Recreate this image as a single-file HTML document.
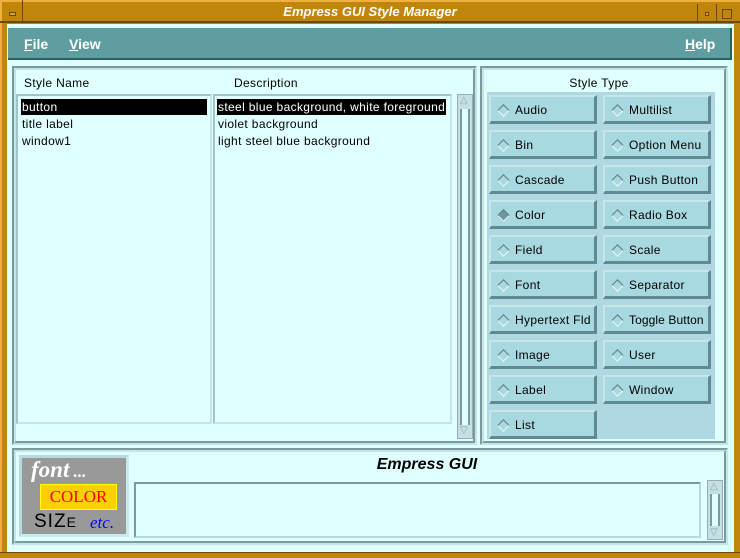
<!DOCTYPE html>
<html><head><style>
*{margin:0;padding:0;box-sizing:border-box}
body{width:740px;height:558px;background:#c0860c;position:relative;overflow:hidden;font-family:"Liberation Sans","DejaVu Sans",sans-serif;font-size:12px;color:#000;letter-spacing:0.35px}
.a{position:absolute}
.sunk{border-style:solid;border-width:2px;border-color:#7a9a9e #c4e4e6 #c4e4e6 #7a9a9e}
.rais{border-style:solid;border-width:2px;border-color:#c4e4e6 #7a9a9e #7a9a9e #c4e4e6}
.btn{position:absolute;width:108px;height:29px;background:#a8d8e0;border-style:solid;border-width:2px 3px 3px 2px;border-color:#c8e6ea #5e8a90 #5e8a90 #c8e6ea;font-size:12px;line-height:26px;padding-left:24px}
.btn:before{content:"";position:absolute;left:8px;top:9px;width:7px;height:7px;transform:rotate(45deg);border:1px solid;border-color:#5e7a80 #e8f8f8 #e8f8f8 #5e7a80;background:#a8d8e0}
.btn.on:before{background:#6a9aa0}
.li{position:absolute;height:16px;line-height:16px;font-size:12px;padding:0 1px}
.sel{background:#000;color:#fff}
</style></head><body>
<div class="a" style="left:0;top:0;width:740px;height:2px;background:#f0b040"></div>
<div class="a" style="left:0;top:0;width:2px;height:558px;background:#f0b040"></div>
<div class="a" style="left:22px;top:0;width:1px;height:22px;background:#6a4a00"></div>
<div class="a" style="left:9px;top:12px;width:7px;height:4px;border:1px solid #6a4a00;background:#e0a030"></div>
<div class="a" style="left:697px;top:4px;width:1px;height:19px;background:#6a4a00"></div>
<div class="a" style="left:716px;top:4px;width:1px;height:19px;background:#6a4a00"></div>
<div class="a" style="left:705px;top:12px;width:4px;height:4px;border:1px solid #6a4a00;background:#e0a030"></div>
<div class="a" style="left:722px;top:9px;width:10px;height:10px;border:1px solid #6a4a00"></div>
<div class="a" style="left:0;top:21px;width:740px;height:2px;background:#6a4a00"></div>
<div class="a" style="left:0;top:4px;width:740px;text-align:center;color:#fff;font-style:italic;font-weight:bold;font-size:13px;line-height:16px;letter-spacing:0">Empress GUI Style Manager</div>
<div class="a" style="left:7px;top:24px;width:727px;height:528px;background:#e0ffff"></div>
<div class="a" style="left:8px;top:28px;width:724px;height:32px;background:#5f9ea0;border-bottom:2px solid #2f5e60;border-right:2px solid #2f5e60"></div>
<div class="a" style="left:24px;top:36px;color:#fff;font-weight:bold;font-size:14px;letter-spacing:0"><u>F</u>ile</div>
<div class="a" style="left:69px;top:36px;color:#fff;font-weight:bold;font-size:14px;letter-spacing:0"><u>V</u>iew</div>
<div class="a" style="left:685px;top:36px;color:#fff;font-weight:bold;font-size:14px;letter-spacing:0"><u>H</u>elp</div>
<div class="a sunk" style="left:12px;top:66px;width:465px;height:379px"></div>
<div class="a rais" style="left:14px;top:68px;width:461px;height:375px"></div>
<div class="a" style="left:24px;top:76px">Style Name</div>
<div class="a" style="left:234px;top:76px">Description</div>
<div class="a sunk" style="left:16px;top:94px;width:196px;height:330px;border-color:#a0c4c8 #c4e4e6 #c4e4e6 #a0c4c8"></div>
<div class="li sel a" style="left:21px;top:99px;width:186px">button</div>
<div class="li a" style="left:21px;top:116px">title label</div>
<div class="li a" style="left:21px;top:133px">window1</div>
<div class="a sunk" style="left:213px;top:94px;width:239px;height:330px;border-color:#a0c4c8 #c4e4e6 #c4e4e6 #a0c4c8"></div>
<div class="li sel a" style="left:217px;top:99px">steel blue background, white foreground</div>
<div class="li a" style="left:217px;top:116px">violet background</div>
<div class="li a" style="left:217px;top:133px">light steel blue background</div>
<div class="a" style="left:457px;top:94px;width:16px;height:345px;background:#c4e0e2;border:1px solid #9ab"></div>
<div class="a" style="left:460px;top:109px;width:10px;height:316px;background:#e0ffff;border-left:2px solid #7a9a9e;border-right:2px solid #7a9a9e"></div>
<div class="a" style="left:460px;top:96px;font-size:10px;color:#8aa;line-height:10px">△</div>
<div class="a" style="left:460px;top:426px;font-size:10px;color:#8aa;line-height:10px">▽</div>
<div class="a sunk" style="left:480px;top:66px;width:248px;height:379px"></div>
<div class="a rais" style="left:482px;top:68px;width:244px;height:375px"></div>
<div class="a" style="left:482px;top:76px;width:234px;text-align:center">Style Type</div>
<div class="a" style="left:487px;top:92px;width:230px;height:349px;background:#b0d8e2;border-right:2px solid #e0ffff;border-bottom:2px solid #e0ffff"></div>
<div class="btn" style="left:489px;top:95px">Audio</div>
<div class="btn" style="left:603px;top:95px">Multilist</div>
<div class="btn" style="left:489px;top:130px">Bin</div>
<div class="btn" style="left:603px;top:130px">Option Menu</div>
<div class="btn" style="left:489px;top:165px">Cascade</div>
<div class="btn" style="left:603px;top:165px">Push Button</div>
<div class="btn on" style="left:489px;top:200px">Color</div>
<div class="btn" style="left:603px;top:200px">Radio Box</div>
<div class="btn" style="left:489px;top:235px">Field</div>
<div class="btn" style="left:603px;top:235px">Scale</div>
<div class="btn" style="left:489px;top:270px">Font</div>
<div class="btn" style="left:603px;top:270px">Separator</div>
<div class="btn" style="left:489px;top:305px">Hypertext Fld</div>
<div class="btn" style="left:603px;top:305px;letter-spacing:0.1px">Toggle Button</div>
<div class="btn" style="left:489px;top:340px">Image</div>
<div class="btn" style="left:603px;top:340px">User</div>
<div class="btn" style="left:489px;top:375px">Label</div>
<div class="btn" style="left:603px;top:375px">Window</div>
<div class="btn" style="left:489px;top:410px">List</div>
<div class="a sunk" style="left:12px;top:448px;width:716px;height:97px"></div>
<div class="a rais" style="left:14px;top:450px;width:712px;height:93px"></div>
<div class="a" style="left:19px;top:455px;width:110px;height:82px;background:#999;border:3px solid;border-color:#b8dadc #c8eaec #c8eaec #b8dadc"></div>
<div class="a" style="left:31px;top:457px;color:#fff;font-family:'Liberation Serif',serif;font-style:italic;font-weight:bold;font-size:23px;letter-spacing:0">font<span style="font-size:17px"> ...</span></div>
<div class="a" style="left:40px;top:484px;width:77px;height:26px;background:#ffd000;border:1px solid #ff0;color:#f00;font-family:'Liberation Serif',serif;font-size:17px;line-height:24px;text-align:center;letter-spacing:0">COLOR</div>
<div class="a" style="left:34px;top:511px;font-size:19px;line-height:22px;letter-spacing:1px">SI<span>Z</span><span style="font-size:14px">E</span></div>
<div class="a" style="left:90px;top:513px;color:#00f;font-family:'Liberation Serif',serif;font-style:italic;font-size:17px;letter-spacing:0">etc.</div>
<div class="a" style="left:134px;top:456px;width:586px;text-align:center;font-style:italic;font-weight:bold;font-size:16px;letter-spacing:0">Empress GUI</div>
<div class="a sunk" style="left:134px;top:482px;width:567px;height:56px;border-color:#7a9a9e #b8dadc #b8dadc #7a9a9e"></div>
<div class="a" style="left:707px;top:480px;width:16px;height:60px;background:#c4e0e2;border:1px solid #9ab"></div>
<div class="a" style="left:710px;top:494px;width:10px;height:32px;background:#e0ffff;border-left:2px solid #7a9a9e;border-right:2px solid #7a9a9e"></div>
<div class="a" style="left:710px;top:482px;font-size:10px;color:#8aa;line-height:10px">△</div>
<div class="a" style="left:710px;top:528px;font-size:10px;color:#8aa;line-height:10px">▽</div>
<div class="a" style="left:0;top:552px;width:740px;height:6px;background:#c0860c;border-top:1px solid #6a4a00"></div>
</body></html>
